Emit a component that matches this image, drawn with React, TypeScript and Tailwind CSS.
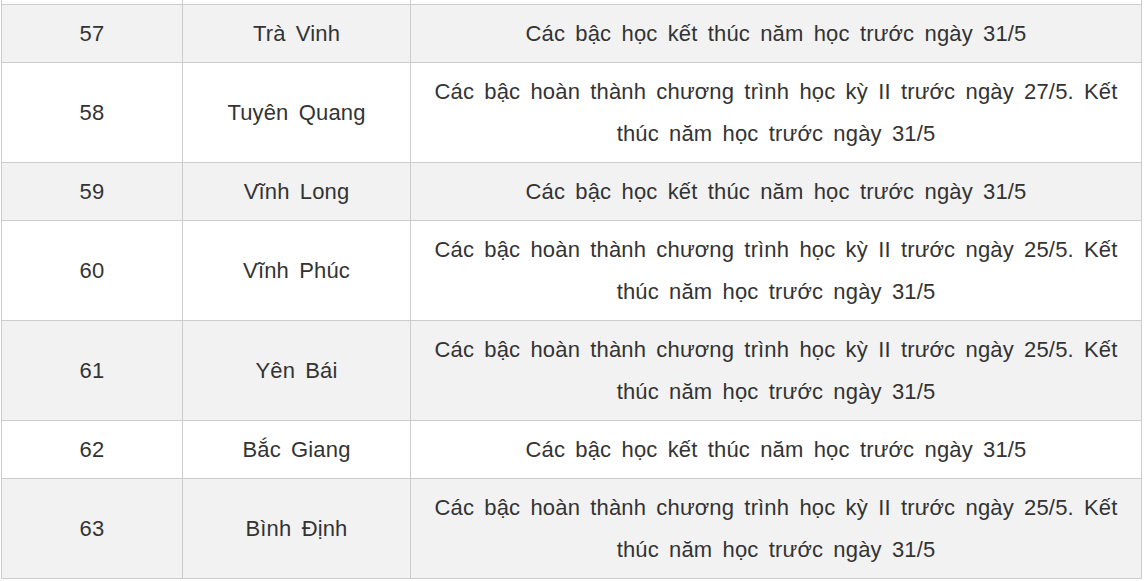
const rows = [
  { no: "56", name: "Tiền Giang", text: "Các bậc học kết thúc năm học trước ngày 31/5" },
  { no: "57", name: "Trà Vinh", text: "Các bậc học kết thúc năm học trước ngày 31/5" },
  { no: "58", name: "Tuyên Quang", text: "Các bậc hoàn thành chương trình học kỳ II trước ngày 27/5. Kết thúc năm học trước ngày 31/5" },
  { no: "59", name: "Vĩnh Long", text: "Các bậc học kết thúc năm học trước ngày 31/5" },
  { no: "60", name: "Vĩnh Phúc", text: "Các bậc hoàn thành chương trình học kỳ II trước ngày 25/5. Kết thúc năm học trước ngày 31/5" },
  { no: "61", name: "Yên Bái", text: "Các bậc hoàn thành chương trình học kỳ II trước ngày 25/5. Kết thúc năm học trước ngày 31/5" },
  { no: "62", name: "Bắc Giang", text: "Các bậc học kết thúc năm học trước ngày 31/5" },
  { no: "63", name: "Bình Định", text: "Các bậc hoàn thành chương trình học kỳ II trước ngày 25/5. Kết thúc năm học trước ngày 31/5" },
];

export default function App() {
  return (
    <div className="h-[581px] w-[1146px] overflow-hidden bg-white pl-[1px]">
      <table
        className="mt-[-54px] w-[1140px] table-fixed border-collapse text-[22px] leading-[42px] tracking-[0.15px] [word-spacing:4px] text-[#333333]"
        style={{ fontFamily: '"Liberation Sans", Arial, sans-serif' }}
      >
        <colgroup>
          <col className="w-[181px]" />
          <col className="w-[228px]" />
          <col className="w-[731px]" />
        </colgroup>
        <tbody>
          {rows.map((r, i) => (
            <tr key={r.no} className={i % 2 === 1 ? "bg-[#f2f2f2]" : "bg-white"}>
              <td className="border border-[#cccccc] px-2 pt-[8px] pb-[7px] text-center align-middle">{r.no}</td>
              <td className="border border-[#cccccc] px-2 pt-[8px] pb-[7px] text-center align-middle">{r.name}</td>
              <td className="border border-[#cccccc] px-2 pt-[8px] pb-[7px] text-center align-middle">{r.text}</td>
            </tr>
          ))}
        </tbody>
      </table>
    </div>
  );
}
